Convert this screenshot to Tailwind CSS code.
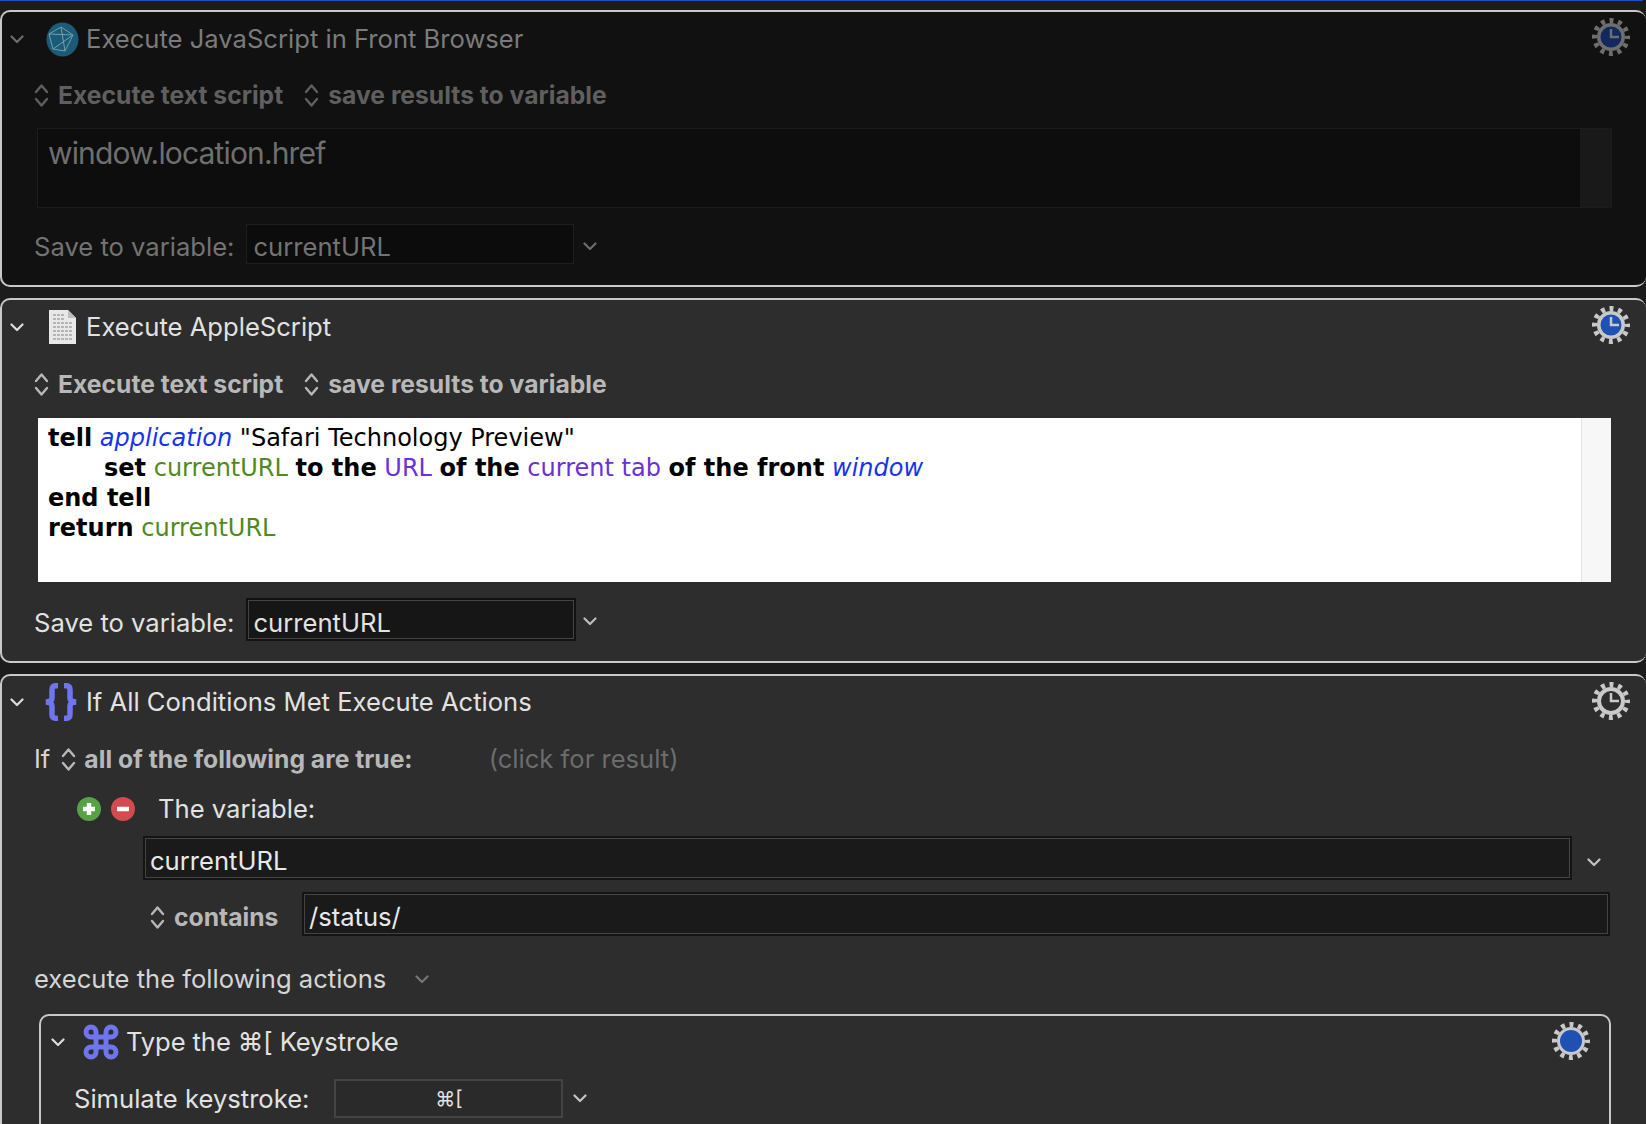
<!DOCTYPE html>
<html lang="en">
  <head>
    <meta charset="UTF-8" />
    <title>Keyboard Maestro</title>
    <script src="https://cdn.jsdelivr.net/npm/@tailwindcss/browser@4"></script>
  </head>
  <body class="bg-[#1c1c1c] font-['Inter',sans-serif] text-[25.6px] leading-none">
    <svg class="hidden">
      <symbol id="chev" viewBox="0 0 14 9"><path d="M1.500 1.500 7 7l5.500-5.500" fill="none" stroke="currentColor" stroke-width="2.200" stroke-linecap="round" stroke-linejoin="round"/></symbol>
      <symbol id="updown" viewBox="0 0 15 25"><path d="M2 9 7.500 2.500 13 9M2 16l5.500 6.500L13 16" fill="none" stroke="currentColor" stroke-width="2.400" stroke-linecap="round" stroke-linejoin="round"/></symbol>
      <symbol id="gear" viewBox="0 0 38 38">
        <circle cx="19" cy="19" r="16.500" fill="none" stroke="currentColor" stroke-width="5" stroke-dasharray="4 4.639" stroke-dashoffset="2"/>
        <circle cx="19" cy="19" r="12" fill="none" stroke="currentColor" stroke-width="4"/>
      </symbol>
    </svg>

    <div class="h-[1124px] overflow-hidden relative">
      <div class="absolute top-0 left-0 w-[1643px] h-[1px] bg-[#1f4fc4]"></div>

      <!-- dimmed action -->
      <section class="absolute top-[10px] left-0 w-full h-[277px] border-2 border-r-0 border-[#c9c9c9] rounded-[10px] bg-[#111111]">
        <div class="h-[52px] pt-[2px] flex items-center text-[#7b7b7b]">
          <svg class="w-[14px] h-[9px] ml-[8px] text-[#6d6d6d]"><use href="#chev"/></svg>
          <svg class="w-[33px] h-[35px] ml-[22px]" viewBox="0 0 33 35">
            <ellipse cx="16.500" cy="17.500" rx="16" ry="17" fill="#1d5a78"/>
            <path d="M3 12 15 5l12 8-8 16L7 27zM15 5l4 24M3 12l24 1M7 27l20-14" fill="none" stroke="#6fa3ab" stroke-width="1"/>
          </svg>
          <span class="ml-[7px]">Execute JavaScript in Front Browser</span>
        </div>
        <div class="absolute right-[16px] top-[6px] w-[38px] h-[38px] text-[#6e6e6e]">
          <svg class="absolute inset-0 w-[38px] h-[38px]"><use href="#gear"/></svg>
          <svg class="absolute inset-0" viewBox="0 0 38 38"><circle cx="19" cy="19" r="10.500" fill="#11295f"/><path d="M19 11v8h8" fill="none" stroke="#6e6e6e" stroke-width="2.500"/></svg>
        </div>
        <div class="h-[64px] pb-[2px] flex items-center pl-[32px] font-bold text-[#5f5f5f]">
          <svg class="w-[15px] h-[25px]"><use href="#updown"/></svg>
          <span class="ml-[9px] text-[24.700px]">Execute text script</span>
          <svg class="w-[15px] h-[25px] ml-[21px]"><use href="#updown"/></svg>
          <span class="ml-[9px] text-[24.700px]">save results to variable</span>
        </div>
        <div class="ml-[35px] mr-[34px] h-[80px] flex bg-[#0d0d0d] border border-[#1c1c1c] text-[#6f6f6f]">
          <div class="flex-1 pl-[10px] pt-[9px] text-[30px] tracking-[-0.850px]">window.location.href</div>
          <div class="w-[31px] bg-[#191919]"></div>
        </div>
        <div class="flex items-center mt-[16px] pl-[32px] text-[#737373]">
          <span class="mt-[6px]">Save to variable:</span>
          <div class="ml-[11px] w-[328px] h-[40px] flex items-center pl-[7px] pt-[6px] bg-[#0c0c0c] border border-[#1e1e1e]">currentURL</div>
          <svg class="w-[14px] h-[9px] ml-[9px] mt-[4px] text-[#6d6d6d]"><use href="#chev"/></svg>
        </div>
      </section>

      <!-- applescript action -->
      <section class="absolute top-[298px] left-0 w-full h-[365px] border-2 border-r-0 border-[#c9c9c9] rounded-[10px] bg-[#2d2d2d]">
        <div class="h-[52px] pt-[2px] flex items-center text-[#e2e2e2]">
          <svg class="w-[14px] h-[9px] ml-[8px] text-[#dddddd]"><use href="#chev"/></svg>
          <svg class="w-[29px] h-[36px] ml-[24px]" viewBox="0 0 29 36">
            <path d="M1 1h19l8 8v26H1z" fill="#e8e8e8"/>
            <path d="M20 1l8 8h-8z" fill="#bdbdbd"/>
            <path d="M5 6h11M5 10h12M5 14h19M5 18h19M5 22h19M5 26h19M5 30h19" stroke="#a5a5a5" stroke-width="1.500" stroke-dasharray="3 1"/>
          </svg>
          <span class="ml-[9px]">Execute AppleScript</span>
        </div>
        <div class="absolute right-[16px] top-[6px] w-[38px] h-[38px] text-[#c9c9c9]">
          <svg class="absolute inset-0 w-[38px] h-[38px]"><use href="#gear"/></svg>
          <svg class="absolute inset-0" viewBox="0 0 38 38"><circle cx="19" cy="19" r="10.500" fill="#1f51b5"/><path d="M19 11v8h8" fill="none" stroke="#c9c9c9" stroke-width="2.500"/></svg>
        </div>
        <div class="h-[66px] pb-[2px] flex items-center pl-[32px] font-bold text-[#b8b8b8]">
          <svg class="w-[15px] h-[25px]"><use href="#updown"/></svg>
          <span class="ml-[9px] text-[24.700px]">Execute text script</span>
          <svg class="w-[15px] h-[25px] ml-[21px]"><use href="#updown"/></svg>
          <span class="ml-[9px] text-[24.700px]">save results to variable</span>
        </div>
        <div class="ml-[36px] mr-[35px] h-[164px] flex bg-white text-black">
          <div class="flex-1 pl-[10px] pt-[5px] font-['DejaVu_Sans',sans-serif] text-[24px] leading-[30px]">
            <div><b>tell</b> <i class="text-[#1533f0]">application</i> "Safari Technology Preview"</div>
            <div class="pl-[56px]"><b>set</b> <span class="text-[#4e8a1e]">currentURL</span> <b>to the</b> <span class="text-[#6a31d6]">URL</span> <b>of the</b> <span class="text-[#6a31d6]">current tab</span> <b>of the front</b> <i class="text-[#1533f0]">window</i></div>
            <div><b>end tell</b></div>
            <div><b>return</b> <span class="text-[#4e8a1e]">currentURL</span></div>
          </div>
          <div class="w-[30px] bg-[#f7f7f7] border-l border-[#e3e3e3]"></div>
        </div>
        <div class="flex items-center mt-[16px] pl-[32px] text-[#e2e2e2]">
          <span class="mt-[6px]">Save to variable:</span>
          <div class="ml-[11px] w-[330px] h-[43px] flex items-center pl-[6px] pt-[6px] bg-[#161616] border-2 border-[#121212] outline outline-1 -outline-offset-3 outline-[#444444]">currentURL</div>
          <svg class="w-[14px] h-[9px] ml-[7px] mt-[4px] text-[#bdbdbd]"><use href="#chev"/></svg>
        </div>
      </section>

      <!-- if action -->
      <section class="absolute top-[674px] left-0 w-full h-[470px] border-2 border-r-0 border-[#c9c9c9] rounded-[10px] bg-[#2d2d2d]">
        <div class="h-[52px] flex items-center text-[#e2e2e2]">
          <svg class="w-[14px] h-[9px] ml-[8px] text-[#dddddd]"><use href="#chev"/></svg>
          <svg class="w-[36px] h-[38px] ml-[19px]" viewBox="0 0 36 38">
            <path d="M15 2.500C8 2.500 9 5.500 9 9v6c0 2-1 3.500-6 4 5 .5 6 2 6 4v6c0 3.500-1 6.500 6 6.500M21 2.500c7 0 6 3 6 6.500v6c0 2 1 3.500 6 4-5 .5-6 2-6 4v6c0 3.500 1 6.500-6 6.500" fill="none" stroke="#6f75ee" stroke-width="5.500"/>
          </svg>
          <span class="ml-[7px]">If All Conditions Met Execute Actions</span>
        </div>
        <div class="absolute right-[16px] top-[6px] w-[38px] h-[38px] text-[#c9c9c9]">
          <svg class="absolute inset-0 w-[38px] h-[38px]"><use href="#gear"/></svg>
          <svg class="absolute inset-0" viewBox="0 0 38 38"><path d="M19 11v8h8" fill="none" stroke="#c9c9c9" stroke-width="2.500"/></svg>
        </div>
        <div class="h-[62px] flex items-center pl-[32px] text-[#d5d5d5]">
          <span>If</span>
          <svg class="w-[15px] h-[25px] ml-[11px] text-[#b8b8b8]"><use href="#updown"/></svg>
          <span class="ml-[8px] text-[24.700px] font-bold text-[#b8b8b8]">all of the following are true:</span>
          <span class="ml-[76px] text-[#6c6c6c]">(click for result)</span>
        </div>
        <div class="h-[36px] flex items-center pl-[75px] text-[#e2e2e2]">
          <svg class="w-[24px] h-[24px] mt-[2px]" viewBox="0 0 24 24"><circle cx="12" cy="12" r="12" fill="#55a343"/><path d="M12 6v12M6 12h12" stroke="#fff" stroke-width="4.500"/></svg>
          <svg class="w-[24px] h-[24px] mt-[2px] ml-[10px]" viewBox="0 0 24 24"><circle cx="12" cy="12" r="12" fill="#d24b50"/><path d="M6 12h12" stroke="#fff" stroke-width="4.500"/></svg>
          <span class="ml-[23px] mt-[2px]">The variable:</span>
        </div>
        <div class="flex items-center mt-[10px] pl-[141px] text-[#e8e8e8]">
          <div class="w-[1429px] h-[44px] flex items-center pl-[5px] pt-[6px] bg-[#1a1a1a] border-2 border-[#141414] outline outline-1 -outline-offset-3 outline-[#444444]">currentURL</div>
          <svg class="w-[14px] h-[9px] ml-[15px] mt-[8px] text-[#c4c4c4]"><use href="#chev"/></svg>
        </div>
        <div class="flex items-center mt-[12px] pl-[148px] text-[#e8e8e8]">
          <svg class="w-[15px] h-[25px] mt-[6px] text-[#b8b8b8]"><use href="#updown"/></svg>
          <span class="ml-[9px] w-[128px] mt-[6px] text-[24.700px] font-bold text-[#b8b8b8]">contains</span>
          <div class="w-[1308px] h-[44px] flex items-center pl-[5px] pt-[6px] bg-[#1a1a1a] border-2 border-[#141414] outline outline-1 -outline-offset-3 outline-[#444444]">/status/</div>
        </div>
        <div class="flex items-center h-[78px] pl-[32px] text-[#d5d5d5]">
          <span class="mt-[8px]">execute the following actions</span>
          <svg class="w-[14px] h-[9px] ml-[29px] mt-[8px] text-[#777777]"><use href="#chev"/></svg>
        </div>

        <!-- nested keystroke action -->
        <div class="relative ml-[37px] mr-[35px] h-[200px] border-2 border-[#c9c9c9] rounded-[10px]">
          <div class="h-[52px] flex items-center text-[#e2e2e2]">
            <svg class="w-[14px] h-[9px] ml-[10px] text-[#dddddd]"><use href="#chev"/></svg>
            <svg class="w-[36px] h-[36px] ml-[18px]" viewBox="0 0 36 36">
              <path d="M13 13h10v10H13zM13 13H8a5 5 0 1 1 5-5zM23 13V8a5 5 0 1 1 5 5zM13 23v5a5 5 0 1 1-5-5zM23 23h5a5 5 0 1 1-5 5z" fill="none" stroke="#6f75ee" stroke-width="5"/>
            </svg>
            <span class="ml-[7px] tracking-[-0.100px]">Type the ⌘[ Keystroke</span>
          </div>
          <div class="absolute right-[19px] top-[6px] w-[38px] h-[38px] text-[#c9c9c9]">
            <svg class="absolute inset-0 w-[38px] h-[38px]"><use href="#gear"/></svg>
            <svg class="absolute inset-0" viewBox="0 0 38 38"><circle cx="19" cy="19" r="11" fill="#1f51b5"/></svg>
          </div>
          <div class="flex items-center mt-[11px] pl-[33px] text-[#e2e2e2]">
            <span>Simulate keystroke:</span>
            <div class="ml-[25px] w-[229px] h-[39px] flex items-center justify-center bg-[#2a2a2a] border-2 border-[#444444] text-[20px]">⌘[</div>
            <svg class="w-[14px] h-[9px] ml-[10px] text-[#c4c4c4]"><use href="#chev"/></svg>
          </div>
        </div>
      </section>
    </div>
  </body>
</html>
